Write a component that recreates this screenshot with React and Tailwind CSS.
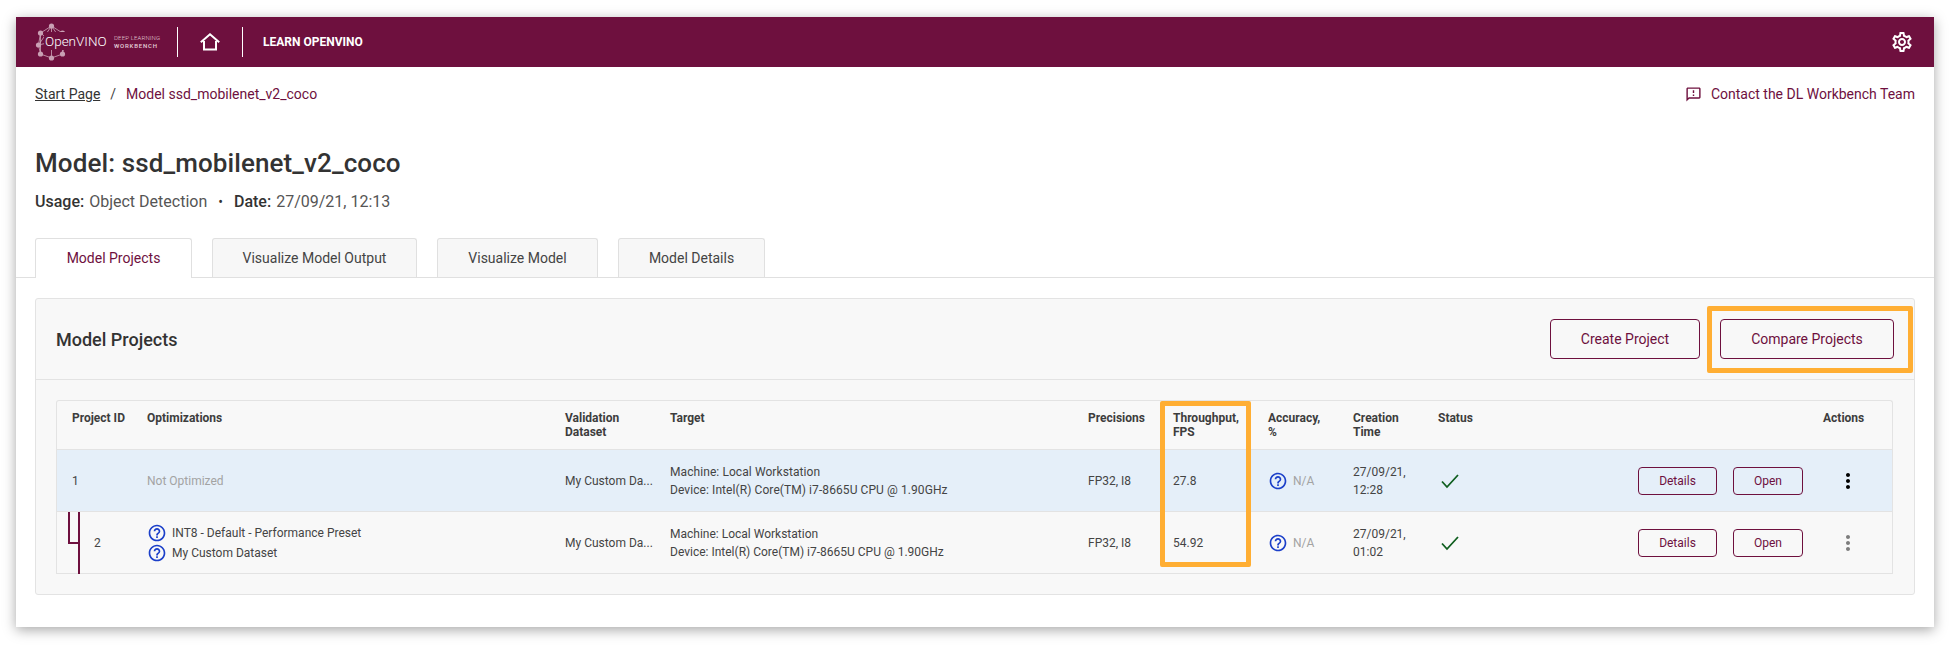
import { MdOutlineSettings, MdOutlineHelpOutline, MdMoreVert, MdOutlineFeedback } from "react-icons/md";

const gridCols = "grid grid-cols-[75px_418px_105px_418px_85px_95px_85px_85px_385px_69px] pl-[15px]";

function Logo() {
  const nodes = [[16, 3], [5, 10], [27, 10], [3, 22], [29, 22], [5, 31], [27, 31], [16, 35], [16, 19]];
  const links = [[0, 1], [0, 2], [1, 3], [2, 4], [3, 5], [4, 6], [5, 7], [6, 7], [0, 8], [1, 8], [2, 8], [3, 8], [4, 8], [7, 8], [1, 5], [2, 6], [0, 3], [0, 4]];
  return (
    <div className="relative h-[38px] w-[124px] shrink-0">
      <svg width="33" height="38" viewBox="0 0 32 38" className="absolute left-0 top-0">
        {links.map(([a, b], i) => (
          <line key={i} x1={nodes[a][0]} y1={nodes[a][1]} x2={nodes[b][0]} y2={nodes[b][1]} stroke="#d9bcca" strokeWidth="0.7" />
        ))}
        {nodes.slice(0, 8).map(([x, y], i) => (
          <circle key={i} cx={x} cy={y} r="2.6" fill="#c9a0b4" />
        ))}
      </svg>
      <span className="absolute left-[9px] top-[9px] bg-[#6e103e] pl-[1px] text-[13.5px] leading-[18px] font-light text-white">OpenVINO</span>
      <div className="absolute left-[79px] top-[11px] text-[6px] leading-[7.5px] text-[#e4d0da]">
        <div className="font-light whitespace-nowrap tracking-[0.15px]">DEEP LEARNING</div>
        <div className="font-medium whitespace-nowrap tracking-[0.8px]">WORKBENCH</div>
      </div>
    </div>
  );
}

function HomeIcon() {
  return (
    <svg width="20" height="18" viewBox="0 0 20 18" fill="none" stroke="white" strokeWidth="2">
      <path d="M0.8 9.3 L10 1.3 L19.2 9.3" />
      <path d="M4 8 V16.5 H16 V8" />
    </svg>
  );
}

function Help() {
  return <MdOutlineHelpOutline size={20} className="shrink-0 text-[#1b3fc9]" />;
}

function Check() {
  return (
    <svg width="20" height="16" viewBox="0 0 20 16" fill="none" stroke="#0f5e1f" strokeWidth="1.8" className="ml-[2px]">
      <path d="M2 8.5 L7 14 L18 2" />
    </svg>
  );
}

function OutlineButton({ className, children }) {
  return (
    <button className={"rounded-[4px] border border-[#6e103e] text-[#6e103e] " + className}>{children}</button>
  );
}

function Row({ highlighted, id, optimizations, dataset, machineClass, time, throughput, muted }) {
  return (
    <div className={gridCols + " relative h-[62px] items-center border-b border-[#e3e3e3] text-[12px] leading-[18px] text-[#444] " + (highlighted ? "bg-[#e5eff9]" : "")}>
      <div>{id}</div>
      <div>{optimizations}</div>
      <div>{dataset}</div>
      <div className={machineClass}>
        <div>Machine: Local Workstation</div>
        <div>Device: Intel(R) Core(TM) i7-8665U CPU @ 1.90GHz</div>
      </div>
      <div>FP32, I8</div>
      <div>{throughput}</div>
      <div className="flex items-center gap-[5px] text-[#a3a3a3]">
        <Help />
        N/A
      </div>
      <div>
        <div>{time[0]}</div>
        <div>{time[1]}</div>
      </div>
      <div className="flex items-center justify-between pr-[20px]">
        <Check />
        <div className="flex gap-[16px]">
          <OutlineButton className="h-[28px] w-[79px] text-[12px]">Details</OutlineButton>
          <OutlineButton className="h-[28px] w-[70px] text-[12px]">Open</OutlineButton>
        </div>
      </div>
      <div className="flex pl-[13px]">
        <MdMoreVert size={24} className={muted ? "text-[#7d7d7d]" : "text-black"} />
      </div>
    </div>
  );
}

export default function App() {
  return (
    <div className="h-[651px] overflow-hidden bg-white pt-[17px] pl-[16px] pr-[24px] font-['Roboto',sans-serif]">
      <div className="h-[610px] bg-white shadow-[0_3px_12px_rgba(0,0,0,0.35)]">
        <header className="flex h-[50px] items-center bg-[#6e103e] pl-[19px] pr-[20px] text-white">
          <Logo />
          <div className="ml-[18px] h-[30px] w-px bg-white" />
          <div className="flex w-[64px] justify-center">
            <HomeIcon />
          </div>
          <div className="h-[30px] w-px bg-white" />
          <span className="ml-[20px] text-[12px] font-bold">LEARN OPENVINO</span>
          <MdOutlineSettings size={24} className="ml-auto" />
        </header>

        <div className="flex h-[55px] items-center justify-between pl-[19px] pr-[19px] text-[14px]">
          <div className="flex items-center">
            <span className="text-[#333] underline">Start Page</span>
            <span className="ml-[10px] text-[#444]">/</span>
            <span className="ml-[10px] text-[#6e103e]">Model ssd_mobilenet_v2_coco</span>
          </div>
          <div className="flex items-center text-[#6e103e]">
            <MdOutlineFeedback size={17} className="mr-[9px]" />
            Contact the DL Workbench Team
          </div>
        </div>

        <h1 className="mt-[25px] pl-[19px] text-[26px] leading-[32px] font-medium tracking-[0.1px] text-[#333]">Model: ssd_mobilenet_v2_coco</h1>
        <div className="mt-[13px] flex h-[20px] items-center pl-[19px] text-[16px] text-[#555]">
          <span className="font-medium text-[#333]">Usage:</span>
          <span className="ml-[5px]">Object Detection</span>
          <span className="mx-[11px] text-[14px] text-[#333]">•</span>
          <span className="font-medium text-[#333]">Date:</span>
          <span className="ml-[5px]">27/09/21, 12:13</span>
        </div>

        <div className="mt-[26px] flex h-[40px] gap-[20px] border-b border-[#e0e0e0] pl-[19px] text-[14px]">
          <div className="z-10 flex h-[40px] w-[157px] items-center justify-center rounded-t-[3px] border border-b-0 border-[#e0e0e0] bg-white text-[#6e103e]">Model Projects</div>
          <div className="flex h-[39px] w-[205px] items-center justify-center rounded-t-[3px] border border-b-0 border-[#e0e0e0] bg-[#f7f7f7] text-[#444]">Visualize Model Output</div>
          <div className="flex h-[39px] w-[161px] items-center justify-center rounded-t-[3px] border border-b-0 border-[#e0e0e0] bg-[#f7f7f7] text-[#444]">Visualize Model</div>
          <div className="flex h-[39px] w-[147px] items-center justify-center rounded-t-[3px] border border-b-0 border-[#e0e0e0] bg-[#f7f7f7] text-[#444]">Model Details</div>
        </div>

        <section className="mx-[19px] mt-[20px] h-[297px] rounded-[3px] border border-[#e3e3e3] bg-[#f8f8f8]">
          <div className="relative flex h-[81px] items-center border-b border-[#e3e3e3] pl-[20px] pr-[20px]">
            <h2 className="text-[18px] font-medium text-[#333]">Model Projects</h2>
            <div className="ml-auto flex gap-[20px]">
              <OutlineButton className="h-[40px] w-[150px] text-[14px]">Create Project</OutlineButton>
              <OutlineButton className="h-[40px] w-[174px] text-[14px]">Compare Projects</OutlineButton>
            </div>
            <div className="absolute right-[1px] top-[7px] h-[67px] w-[206px] rounded-[2px] border-[5px] border-[#ffae33]" />
          </div>

          <div className="relative ml-[20px] mr-[21px] mt-[20px] rounded-t-[3px] border border-b-0 border-[#e3e3e3]">
            <div className={gridCols + " h-[49px] border-b border-[#e3e3e3] pt-[10px] text-[12px] leading-[14px] font-bold text-[#3d3d3d]"}>
              <div>Project ID</div>
              <div>Optimizations</div>
              <div>Validation<br />Dataset</div>
              <div>Target</div>
              <div>Precisions</div>
              <div>Throughput,<br />FPS</div>
              <div>Accuracy,<br />%</div>
              <div>Creation<br />Time</div>
              <div>Status</div>
              <div>Actions</div>
            </div>
            <Row
              highlighted
              id="1"
              optimizations={<span className="text-[#a3a3a3]">Not Optimized</span>}
              dataset="My Custom Da..."
              machineClass="tracking-[0.08px]"
              throughput="27.8"
              time={["27/09/21,", "12:28"]}
            />
            <Row
              muted
              id={<span className="ml-[22px]">2</span>}
              optimizations={
                <div className="flex flex-col">
                  <div className="flex h-[20px] items-center gap-[5px]">
                    <Help />
                    INT8 - Default - Performance Preset
                  </div>
                  <div className="flex h-[20px] items-center gap-[5px]">
                    <Help />
                    My Custom Dataset
                  </div>
                </div>
              }
              dataset="My Custom Da..."
              throughput="54.92"
              time={["27/09/21,", "01:02"]}
            />
            {/* parent-child connector on the second row */}
            <div className="absolute bottom-0 left-[21px] h-[62px] w-[2px] bg-[#6e103e]" />
            <div className="absolute bottom-[30px] left-[11px] h-[32px] w-[10px] border-b-2 border-l-2 border-[#6e103e]" />
            {/* highlight around the throughput column */}
            <div className="absolute left-[1103px] top-0 h-[166px] w-[91px] rounded-[2px] border-[5px] border-[#ffae33]" />
          </div>
        </section>
      </div>
    </div>
  );
}
